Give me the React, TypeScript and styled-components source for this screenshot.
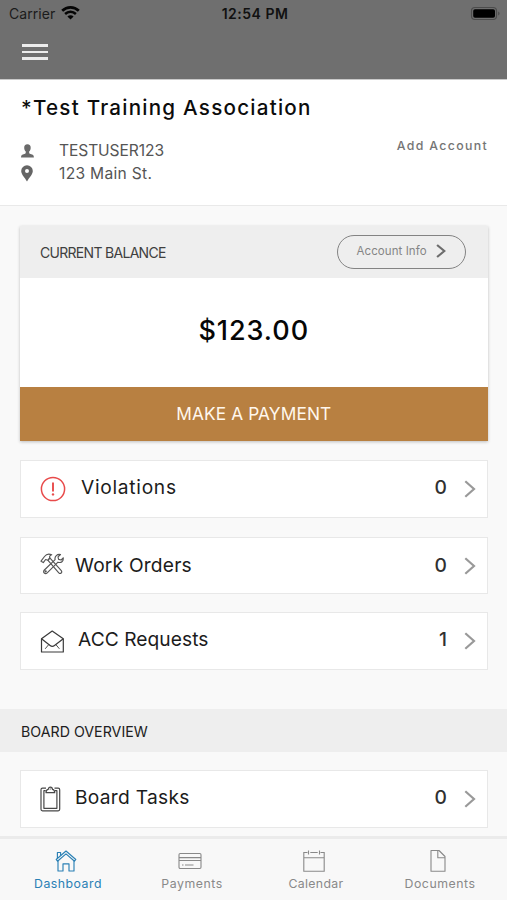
import React from "react";
import styled, { createGlobalStyle } from "styled-components";

const GlobalStyle = createGlobalStyle`
  *, *::before, *::after { box-sizing: border-box; }
  body {
    margin: 0;
    background: #f9f9f9;
    font-family: Inter, "Liberation Sans", sans-serif;
    color: #111;
  }
  svg { display: block; flex: none; }
  button { font-family: inherit; cursor: pointer; }
`;

const Screen = styled.div`
  display: flex;
  flex-direction: column;
  height: 900px;
  overflow: hidden;
`;

const Header = styled.header`
  flex: none;
  height: 80px;
  background: #6f6f6f;
  border-bottom: 1px solid #c9c9c9;
`;

const StatusBar = styled.div`
  display: grid;
  grid-template-columns: 1fr auto 1fr;
  align-items: center;
  height: 28px;
  padding: 0 6px 0 9px;
  line-height: 28px;
`;

const Carrier = styled.div`
  display: flex;
  align-items: center;
  gap: 6px;
  font-size: 14px;
  letter-spacing: 0.05px;
  color: #1b1b1b;
  svg { margin-top: -2px; }
`;

const Clock = styled.time`
  font-size: 14px;
  font-weight: 600;
  letter-spacing: 0.5px;
  color: #111;
`;

const Battery = styled.div`
  justify-self: end;
  margin-top: -2px;
`;

const MenuButton = styled.button`
  display: flex;
  flex-direction: column;
  gap: 4px;
  margin: 16px 0 0 22px;
  padding: 0;
  border: 0;
  background: none;
`;

const MenuLine = styled.span`
  width: 26px;
  height: 2.5px;
  background: #ececec;
`;

const Profile = styled.section`
  flex: none;
  display: grid;
  grid-template-columns: 1fr auto;
  align-content: start;
  height: 126px;
  padding: 14px 19px 0 21px;
  background: #fff;
  border-bottom: 1px solid #e9e9e9;
`;

const Title = styled.h1`
  grid-column: 1 / -1;
  margin: 0;
  font-size: 20.6px;
  font-weight: 500;
  line-height: 28px;
  letter-spacing: 1.24px;
  color: #0c0c0c;
`;

const Details = styled.div`
  display: grid;
  grid-template-columns: 38px auto;
  align-items: center;
  grid-auto-rows: 23px;
  margin-top: 17px;
  justify-content: start;
`;

const Detail = styled.span<{ $spacing: string }>`
  font-size: 15.6px;
  letter-spacing: ${(p) => p.$spacing};
  color: #555;
`;

const AddAccount = styled.a`
  margin-top: 14px;
  font-size: 12.3px;
  font-weight: 500;
  line-height: 20px;
  letter-spacing: 1.35px;
  color: #757575;
`;

const Main = styled.main`
  flex: 1;
  min-height: 0;
  overflow: hidden;
  padding-top: 20px;
`;

const BalanceCard = styled.section`
  display: flex;
  flex-direction: column;
  height: 215px;
  margin: 0 19.5px 19px 20px;
  background: #fff;
  box-shadow: 0 1px 3px rgba(0, 0, 0, 0.24);
`;

const BalanceHead = styled.div`
  display: flex;
  align-items: center;
  justify-content: space-between;
  height: 52px;
  padding: 0 22px 0 20px;
  background: #eee;
`;

const BalanceLabel = styled.h2`
  margin: 1px 0 0;
  font-size: 14px;
  font-weight: 400;
  letter-spacing: -0.7px;
  color: #3f3f3f;
`;

const InfoButton = styled.button`
  display: flex;
  align-items: center;
  justify-content: space-between;
  width: 129px;
  height: 34px;
  margin-top: -1px;
  padding: 0 19px 2px;
  border: 1.5px solid #838383;
  border-radius: 17px;
  background: none;
  font-size: 11.5px;
  letter-spacing: 0.08px;
  white-space: nowrap;
  color: #858585;
`;

const Amount = styled.div`
  flex: 1;
  display: grid;
  place-items: center;
  padding-bottom: 4px;
  font-size: 27px;
  font-weight: 500;
  letter-spacing: 0.95px;
  color: #060606;
`;

const PayButton = styled.button`
  height: 54px;
  padding: 0 0 2px;
  border: 0;
  background: #b88041;
  font-size: 17.3px;
  letter-spacing: 0.12px;
  color: #fff7ed;
`;

const LinkRow = styled.a<{ $gap: number; $height: number; $after: number }>`
  display: flex;
  align-items: center;
  height: ${(p) => p.$height}px;
  margin: 0 19px ${(p) => p.$after}px 20px;
  padding: 0 11px 0 19px;
  background: #fff;
  border: 1px solid #e8e8e8;
  > svg:first-child { margin-right: ${(p) => p.$gap}px; }
  > svg:last-child { margin-left: 17px; }
`;

const RowLabel = styled.span<{ $spacing: number; $lift?: number }>`
  flex: 1;
  margin-top: -${(p) => p.$lift ?? 4}px;
  font-size: 19.2px;
  letter-spacing: ${(p) => p.$spacing}px;
  color: #1c1c1c;
`;

const RowCount = styled.span<{ $lift?: number }>`
  margin-top: -${(p) => p.$lift ?? 4}px;
  font-size: 19.2px;
  font-weight: 500;
  color: #303030;
`;

const SectionBand = styled.h2`
  display: flex;
  align-items: center;
  height: 43px;
  margin: 0 0 18px;
  padding: 2px 21px 0;
  background: #eee;
  font-size: 14.2px;
  font-weight: 400;
  letter-spacing: 0.02px;
  color: #202020;
`;

const TabBar = styled.nav`
  flex: none;
  display: grid;
  grid-template-columns: repeat(4, 124px);
  height: 64px;
  padding-left: 6px;
  border-top: 3px solid #ebebeb;
  background: #f8f8f8;
`;

const Tab = styled.a<{ $active?: boolean }>`
  display: flex;
  flex-direction: column;
  align-items: center;
  color: ${(p) => (p.$active ? "#2a80b5" : "#898989")};
  svg { height: 24px; margin: 10px 4px 0 0; }
`;

const TabLabel = styled.span<{ $spacing: number }>`
  margin-top: 3px;
  font-size: 12.3px;
  line-height: 16px;
  letter-spacing: ${(p) => p.$spacing}px;
`;

const WifiIcon = () => (
  <svg width="19" height="14" viewBox="0 0 19 14" fill="none" stroke="#050505">
    <path d="M1.2 4.8C5.9.2 13.1.2 17.8 4.8" strokeWidth="2.7" />
    <path d="M4.1 8C7.2 5.1 11.8 5.1 14.9 8" strokeWidth="2.5" />
    <path d="M6.4 10.5c1.8-1.6 4.4-1.6 6.2 0l-3.1 3z" fill="#050505" stroke="none" />
  </svg>
);

const BatteryIcon = () => (
  <svg width="31" height="15" viewBox="0 0 31 15">
    <rect x="1.500" y="1.500" width="25" height="12" rx="3.500" fill="none" stroke="#4c4c4c" strokeWidth="1.200" />
    <rect x="3.200" y="3.200" width="21.800" height="8.600" rx="1.800" fill="#000" />
    <path d="M28.200 5.500c1.800.6 1.800 3.400 0 4z" fill="#4c4c4c" />
  </svg>
);

const PersonIcon = () => (
  <svg width="13" height="14" viewBox="0 0 13 14" fill="#6a6a6a">
    <path d="M6.400.2C8.600.2 9.800 1.600 9.700 3.700c0 1.900-.7 3-1.600 3.800 0 1.500.1 2.300 1.500 2.600 2.200.4 3.300 1.100 3.300 3.400H0c0-2.300 1.100-3 3.300-3.400 1.400-.3 1.500-1.100 1.500-2.600C3.900 6.700 3.200 5.600 3.200 3.700 3.100 1.600 4.300.2 6.400.2z" />
  </svg>
);

const PinIcon = () => (
  <svg width="12" height="17" viewBox="0 0 12 17">
    <path fill="#656565" fillRule="evenodd" d="M6 .2a5.800 5.800 0 0 1 5.800 5.800C11.800 9.500 7.900 12.800 6 16.500 4.100 12.800.2 9.500.2 6A5.800 5.800 0 0 1 6 .2zm0 3.800a2 2 0 1 0 0 4 2 2 0 0 0 0-4z" />
  </svg>
);

const AlertIcon = () => (
  <svg width="26" height="26" viewBox="0 0 26 26" fill="none" stroke="#e84a4a">
    <circle cx="13" cy="13" r="11.600" strokeWidth="1.500" />
    <path d="M13 6.500v9" strokeWidth="1.900" />
    <circle cx="13" cy="18.400" r="1.200" fill="#e84a4a" stroke="none" />
  </svg>
);

const ToolsIcon = () => (
  <svg width="24" height="26" viewBox="0 0 24 26" fill="none" stroke="#555" strokeWidth="1.150" strokeLinejoin="round">
    <path d="M1 8.200 4.500 3.500C6 1.500 9 .6 11.700 1.800 9.900 2.300 9.300 3.500 9.800 4.900L8 7.300 5.600 6.500 3.300 9.600z" />
    <path d="m8 7.300 1.800-2.400L21.300 17.600c1.500 1.900-.8 3.800-2.500 2.200z" />
    <path d="M20.500 1.500 18 3.800l.6 2.600 2.600.6 2-2.200c.5 3.400-2.100 5.500-5.200 4.400L7.200 19.800c-2 1.900-4.800-.5-2.800-2.800L15.100 6.600C14.400 3.500 17.200.6 20.500 1.500z" />
    <circle cx="5.700" cy="18.400" r=".5" />
  </svg>
);

const MailIcon = () => (
  <svg width="24" height="24" viewBox="0 0 24 24" fill="none" stroke="#3a3a3a" strokeWidth="1.200" strokeLinejoin="round">
    <path d="M1.500 9.800 12.200 2 23.300 9.800V23H1.500z" />
    <path d="M1.500 9.800 10.100 16.500c1.200 1 3.200 1 4.400 0L23.300 9.800" />
    <path d="M8.800 15.500 5.200 19.800M15.800 15.500l3.600 4.300" strokeWidth=".9" />
  </svg>
);

const ClipboardIcon = () => (
  <svg width="21" height="26" viewBox="0 0 21 26" fill="none" stroke="#484848" strokeWidth="1.200" strokeLinejoin="round">
    <path d="M6 2.200H2.500Q1 2.200 1 3.700v19.600q0 1.500 1.500 1.500h15.700q1.500 0 1.500-1.500V3.700q0-1.500-1.500-1.500H14.500" />
    <path d="M5.700 4.700H3.900v17.600h13V4.700H15" />
    <path d="M6 6.700C6 4.500 6.500 3.500 8.300 3.300c0-3 4.100-3 4.100 0 1.800.2 2.300 1.200 2.300 3.400z" />
    <path d="M10.200 2.400v1" />
  </svg>
);

const Chevron = ({ small = false }: { small?: boolean }) => (
  <svg width={small ? 10 : 12} height={small ? 14 : 18} viewBox="0 0 12 18" preserveAspectRatio="none" fill="none">
    <path d="M1.300 1.200 10 9 1.300 16.800" stroke={small ? "#6d6d6d" : "#999"} strokeWidth={small ? 2.600 : 2.200} />
  </svg>
);

const HomeIcon = () => (
  <svg width="22" height="24" viewBox="0 0 22 24" fill="none" stroke="currentColor" strokeWidth="1.150" strokeLinejoin="round">
    <path d="M1.200 10.500 11 2l9.800 8.500-1.300 1.700L11 4.900l-8.500 7.300z" />
    <path d="M2.400 9.200V3.500h3.200v3M3 12.100V22h5v-7.200h6V22h5V12.100" />
  </svg>
);

const CardIcon = () => (
  <svg width="24" height="24" viewBox="0 0 24 24" fill="none" stroke="currentColor" strokeWidth="1.100">
    <rect x="1" y="4.500" width="22" height="15" rx="1.200" />
    <path d="M1 8.600h22M1 11.500h22M4 16h1.500M7 16h8.500" />
  </svg>
);

const CalendarIcon = () => (
  <svg width="22" height="24" viewBox="0 0 22 24" fill="none" stroke="currentColor" strokeWidth="1.100">
    <path d="M4.500 3.500H.8v18.700h20.400V3.500h-3.700M7.300 3.500h7.400M.8 8.700h20.400M5.500 1.500v4M16.500 1.500v4" />
  </svg>
);

const DocumentIcon = () => (
  <svg width="16" height="24" viewBox="0 0 16 24" fill="none" stroke="currentColor" strokeWidth="1.100" strokeLinejoin="round">
    <path d="M1 1.500h8l6 6v14.700H1zM7.800 1.500v7.200H15" />
  </svg>
);

export default function App() {
  return (
    <Screen>
      <GlobalStyle />
      <Header>
        <StatusBar>
          <Carrier>Carrier<WifiIcon /></Carrier>
          <Clock>12:54 PM</Clock>
          <Battery><BatteryIcon /></Battery>
        </StatusBar>
        <MenuButton aria-label="Menu"><MenuLine /><MenuLine /><MenuLine /></MenuButton>
      </Header>

      <Profile>
        <Title>*Test Training Association</Title>
        <Details>
          <PersonIcon /><Detail $spacing="-0.1px">TESTUSER123</Detail>
          <PinIcon /><Detail $spacing="0.3px">123 Main St.</Detail>
        </Details>
        <AddAccount>Add Account</AddAccount>
      </Profile>

      <Main>
        <BalanceCard>
          <BalanceHead>
            <BalanceLabel>CURRENT BALANCE</BalanceLabel>
            <InfoButton>Account Info<Chevron small /></InfoButton>
          </BalanceHead>
          <Amount>$123.00</Amount>
          <PayButton>MAKE A PAYMENT</PayButton>
        </BalanceCard>

        <LinkRow $gap={15} $height={58} $after={19}>
          <AlertIcon /><RowLabel $spacing={0.7}>Violations</RowLabel><RowCount>0</RowCount><Chevron />
        </LinkRow>
        <LinkRow $gap={11} $height={57} $after={18}>
          <ToolsIcon /><RowLabel $spacing={0.2} $lift={1}>Work Orders</RowLabel><RowCount $lift={1}>0</RowCount><Chevron />
        </LinkRow>
        <LinkRow $gap={14} $height={58} $after={39}>
          <MailIcon /><RowLabel $spacing={0.05}>ACC Requests</RowLabel><RowCount>1</RowCount><Chevron />
        </LinkRow>

        <SectionBand>BOARD OVERVIEW</SectionBand>
        <LinkRow $gap={14} $height={58} $after={0}>
          <ClipboardIcon /><RowLabel $spacing={0.28}>Board Tasks</RowLabel><RowCount>0</RowCount><Chevron />
        </LinkRow>
      </Main>

      <TabBar>
        <Tab $active><HomeIcon /><TabLabel $spacing={0.5}>Dashboard</TabLabel></Tab>
        <Tab><CardIcon /><TabLabel $spacing={0.55}>Payments</TabLabel></Tab>
        <Tab><CalendarIcon /><TabLabel $spacing={0.35}>Calendar</TabLabel></Tab>
        <Tab><DocumentIcon /><TabLabel $spacing={0.55}>Documents</TabLabel></Tab>
      </TabBar>
    </Screen>
  );
}
